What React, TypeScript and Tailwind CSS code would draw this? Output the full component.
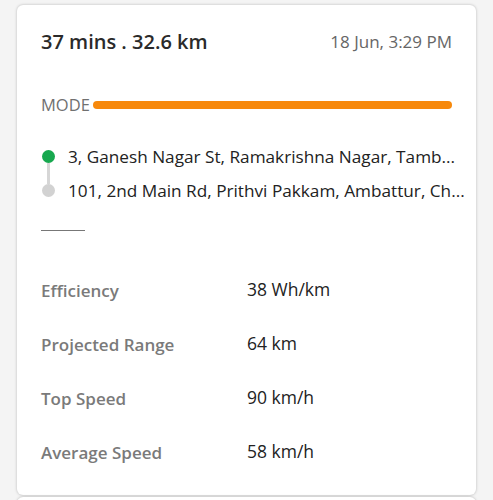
const stats = [
  { label: "Efficiency", value: "38 Wh/km" },
  { label: "Projected Range", value: "64 km" },
  { label: "Top Speed", value: "90 km/h" },
  { label: "Average Speed", value: "58 km/h" },
];

export default function App() {
  return (
    <div className="h-[500px] overflow-hidden bg-[#f4f4f4] px-[17px] pt-[5px] font-['Open_Sans',sans-serif]">
      <div className="h-[490px] rounded-md bg-white px-6 pt-[24px] shadow-[0_0_3px_rgba(0,0,0,0.25)]">
        <div className="flex items-center justify-between">
          <span className="text-[20px] leading-[26px] font-semibold text-[#2a2a2a]">37 mins . 32.6 km</span>
          <span className="text-[17px] leading-[26px] text-[#666]">18 Jun, 3:29 PM</span>
        </div>

        <div className="mt-[39px] flex items-center gap-[3px]">
          <span className="text-[16.5px] leading-[22px] text-[#707070]">MODE</span>
          <div className="h-2 flex-1 rounded-full bg-[#f7890c]" />
        </div>

        <div className="mt-[29px] flex">
          <div className="flex w-[14px] flex-col items-center pt-[5px]">
            <div className="h-[13px] w-[13px] rounded-full bg-[#17a84f]" />
            <div className="h-[21px] w-[3px] bg-[#d6d6d6]" />
            <div className="h-[13px] w-[13px] rounded-full bg-[#d2d2d2]" />
          </div>
          <div className="ml-[13px] min-w-0 flex-1 space-y-[10px] text-[17.2px] text-[#222]">
            <p className="whitespace-nowrap leading-[24px]">3, Ganesh Nagar St, Ramakrishna Nagar, Tamb...</p>
            <p className="whitespace-nowrap leading-[24px]">101, 2nd Main Rd, Prithvi Pakkam, Ambattur, Ch...</p>
          </div>
        </div>

        <div className="mt-[27px] h-px w-[44px] bg-[#777]" />

        <div className="mt-[46px] space-y-[30px]">
          {stats.map((s) => (
            <div key={s.label} className="flex h-[24px] items-center">
              <span className="w-[206px] pt-1 text-[17px] leading-[24px] font-semibold text-[#7a7a7a]">{s.label}</span>
              <span className="text-[17.5px] leading-[24px] text-[#222]">{s.value}</span>
            </div>
          ))}
        </div>
      </div>
      <div className="mt-[2px] h-4 rounded-md bg-white shadow-[0_0_3px_rgba(0,0,0,0.25)]" />
    </div>
  );
}
